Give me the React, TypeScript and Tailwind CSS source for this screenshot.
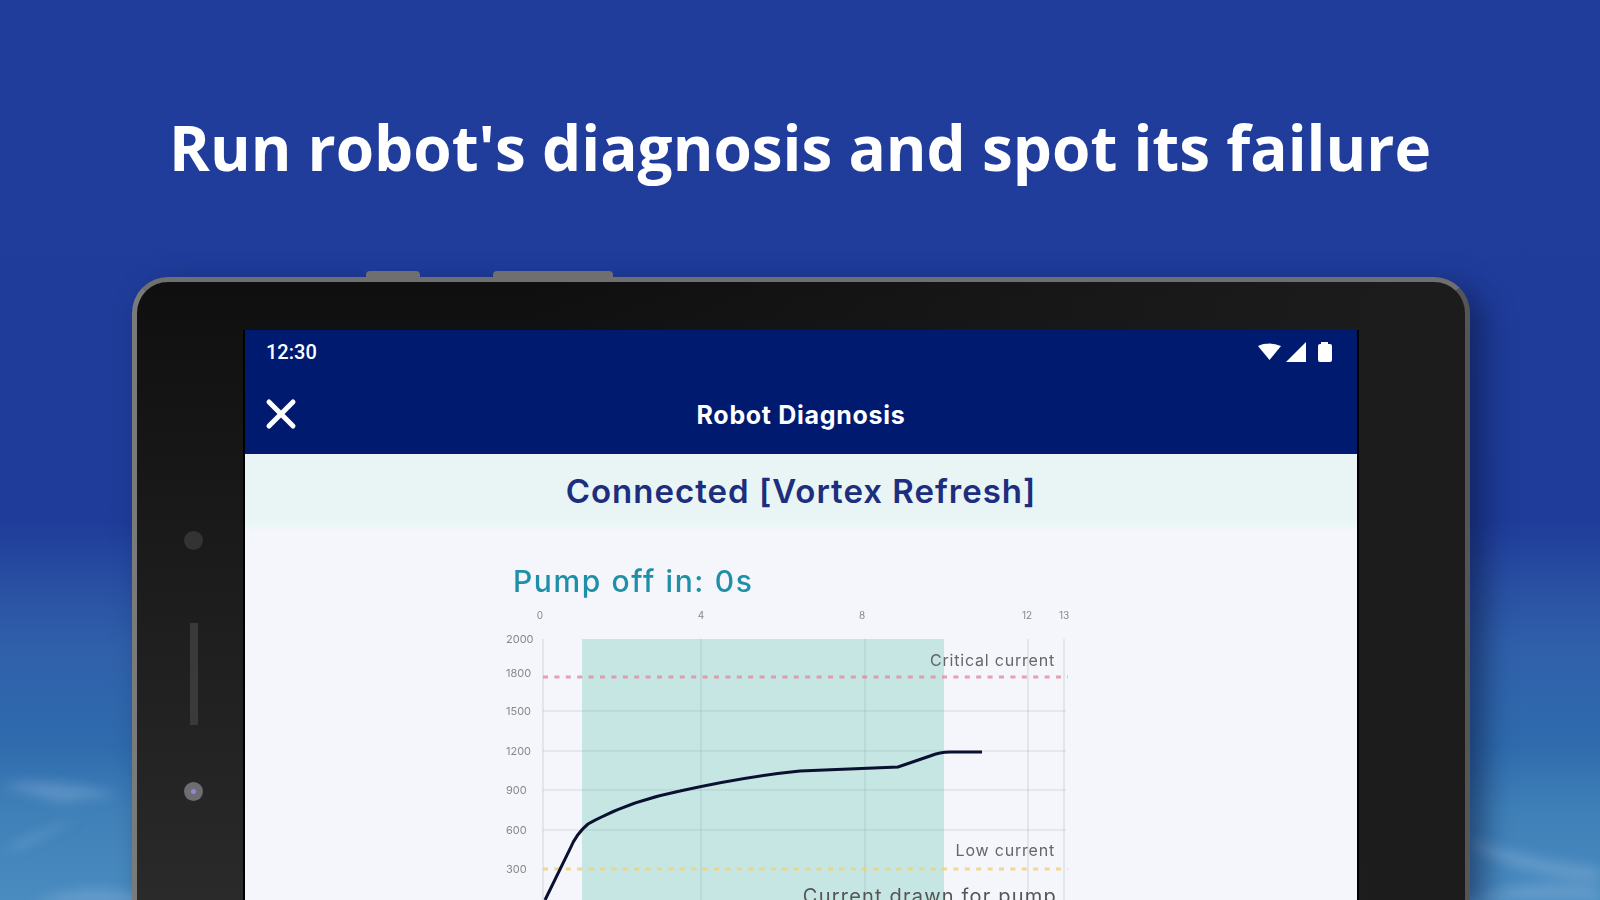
import { X } from "lucide-react";

const gridX = [543, 701, 865, 1028, 1064];
const gridY = [711, 751, 790, 830];
const yLabels = [
  ["2000", 639],
  ["1800", 673],
  ["1500", 711],
  ["1200", 751],
  ["900", 790],
  ["600", 830],
  ["300", 869],
] as const;
const xLabels = [
  ["0", 540],
  ["4", 701],
  ["8", 862],
  ["12", 1027],
  ["13", 1064],
] as const;

function Chart() {
  return (
    <svg width="1112" height="368" viewBox="245 532 1112 368" className="block">
      <text x="513" y="592" fontSize="30" letterSpacing="1.6" fill="#1f8fa8" fontFamily="Inter" fontWeight="500">
        Pump off in: 0s
      </text>
      {xLabels.map(([label, x]) => (
        <text key={label} x={x} y="619" fontSize="10" textAnchor="middle" fill="#888" fontFamily="Inter">
          {label}
        </text>
      ))}
      {yLabels.map(([label, y]) => (
        <text key={label} x="506" y={y + 4} fontSize="11" fill="#888" fontFamily="Inter">
          {label}
        </text>
      ))}
      <rect x="582" y="639" width="362" height="261" fill="#c5e6e3" />
      {gridX.map((x) => (
        <line key={x} x1={x} x2={x} y1="639" y2="900" stroke="#8a9a9f" strokeOpacity="0.35" />
      ))}
      {gridY.map((y) => (
        <line key={y} x1="543" x2="1066" y1={y} y2={y} stroke="#8a9a9f" strokeOpacity="0.3" />
      ))}
      <line x1="543" x2="1068" y1="677" y2="677" stroke="#e58a9c" strokeOpacity="0.8" strokeWidth="3" strokeDasharray="5 6.4" />
      <line x1="543" x2="1068" y1="869" y2="869" stroke="#f0d27a" strokeOpacity="0.85" strokeWidth="3" strokeDasharray="5 6.4" />
      <text x="1055" y="666" fontSize="16" letterSpacing="0.8" textAnchor="end" fill="#666" fontFamily="Inter">
        Critical current
      </text>
      <text x="1055" y="856" fontSize="16" letterSpacing="0.8" textAnchor="end" fill="#666" fontFamily="Inter">
        Low current
      </text>
      <text x="1057" y="903" fontSize="20" letterSpacing="1.2" textAnchor="end" fill="#555" fontFamily="Inter">
        Current drawn for pump
      </text>
      <path
        d="M545 900 L570 849 Q576 834 588 824 C620 806 650 797 680 791 C720 782 760 775 800 771 L898 767 L930 756 Q940 752 950 752 L982 752"
        fill="none"
        stroke="#0a1030"
        strokeWidth="3"
      />
    </svg>
  );
}

function StatusIcons() {
  return (
    <svg width="74" height="22" viewBox="0 0 74 22" fill="white">
      <path d="M0 5 Q11.5 0 23 5 L11.5 19 Z" />
      <path d="M28 21 L48 1 V21 Z" />
      <path d="M63 3 V1 H70 V3 H72 Q74 3 74 5 V19 Q74 21 72 21 H62 Q60 21 60 19 V5 Q60 3 62 3 Z" />
    </svg>
  );
}

export default function App() {
  return (
    <div className="h-[900px] w-[1600px] overflow-hidden bg-[linear-gradient(180deg,#203d9c_0%,#1f3c9a_58%,#2a52a4_66%,#3060aa_72%,#2f6cae_83%,#3f80b8_90%,#4a8cc0_100%)]">
      <div className="relative flex h-[900px] w-[1600px] flex-col items-center blur-[0.5px]">
        {/* soft clouds at the bottom */}
        <svg className="absolute bottom-0 left-0" width="1600" height="140" viewBox="0 760 1600 140">
          <defs>
            <filter id="soft">
              <feGaussianBlur stdDeviation="6" />
            </filter>
          </defs>
          <g filter="url(#soft)" fill="#8fb3dc" fillOpacity="0.4">
            <path d="M0 786 Q50 776 120 795 L60 802 Z" />
            <path d="M0 852 Q40 830 80 818 L20 848 Z" />
            <path d="M30 905 Q80 880 140 895 L140 905 Z" />
            <path d="M1470 838 Q1530 860 1600 868 L1600 882 Q1530 878 1470 848 Z" />
            <path d="M1480 895 Q1540 878 1600 888 L1600 900 L1480 900 Z" />
          </g>
        </svg>

        <h1 className="relative mt-[109px] font-['Open_Sans'] text-[62px] font-bold leading-[76px] text-white">
          Run robot's diagnosis and spot its failure
        </h1>

        {/* device */}
        <div className="relative ml-[132px] mt-[92px] w-[1338px] flex-1 self-start rounded-t-[36px] border-[5px] border-b-0 border-[#6f6f6f] border-l-[#7a7a7a] border-r-[#555] bg-[linear-gradient(90deg,transparent_30%,#1c1c1c_95%),linear-gradient(180deg,#0f0f0f,#2a2a2a)] px-[108px] pt-[48px] shadow-[14px_10px_30px_rgba(8,20,60,0.55)]">
          <div className="absolute -top-[11px] left-[229px] h-[6px] w-[54px] rounded-t-sm bg-[#6f6f6f]" />
          <div className="absolute -top-[11px] left-[356px] h-[6px] w-[120px] rounded-t-sm bg-[#6f6f6f]" />
          <div className="absolute left-[47px] top-[249px] h-[19px] w-[19px] rounded-full bg-[#333]" />
          <div className="absolute left-[53px] top-[341px] h-[102px] w-[8px] bg-[#3a3a3a]" />
          <div className="absolute left-[47px] top-[500px] flex h-[19px] w-[19px] items-center justify-center rounded-full bg-[#6e6e72]">
            <div className="h-[5px] w-[5px] rounded-full bg-[#8f86d8]" />
          </div>

          <div className="flex h-full flex-col overflow-hidden bg-[#f4f6fb] font-['Inter'] shadow-[-2px_0_0_#000,2px_0_0_#000]">
            <div className="flex h-[42px] items-center justify-between bg-[#001a70] pl-[21px] pr-[25px] pt-[2px] text-white">
              <span className="font-['Roboto'] text-[20px] font-medium">12:30</span>
              <StatusIcons />
            </div>
            <div className="relative flex h-[82px] items-center justify-center bg-[#001a70] pt-[6px] text-[25px] font-bold tracking-[0.7px] text-white">
              <X className="absolute left-[12px] top-[18px] h-[48px] w-[48px]" strokeWidth={2.5} />
              Robot Diagnosis
            </div>
            <div className="flex h-[78px] items-center justify-center bg-[linear-gradient(180deg,#e9f5f5_85%,#f4f6fb)] pb-[2px] text-[33px] font-semibold tracking-[1px] text-[#1d2e7e]">
              Connected [Vortex Refresh]
            </div>
            <Chart />
          </div>
        </div>
      </div>
    </div>
  );
}
